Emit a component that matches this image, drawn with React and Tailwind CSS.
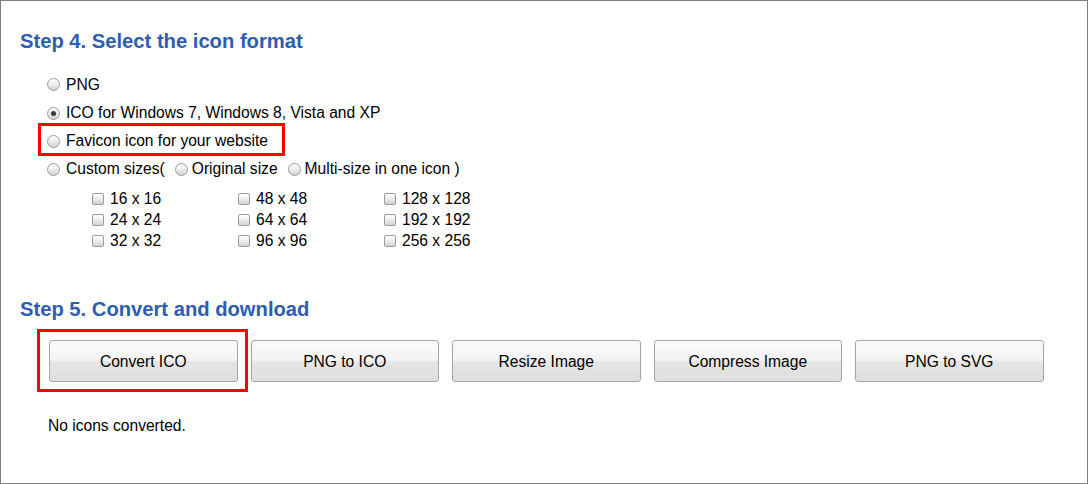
import React from "react";

function Radio({ checked = false, className = "" }) {
  return (
    <span
      className={
        "relative inline-block w-[13px] h-[13px] shrink-0 rounded-full border border-[#9c9c9c] bg-[linear-gradient(to_bottom,#ffffff_0%,#eeeeee_45%,#d2d2d2_100%)] " +
        className
      }
    >
      {checked && (
        <span className="absolute left-[3px] top-[3px] w-[5px] h-[5px] rounded-full bg-[#3a3a3a]" />
      )}
    </span>
  );
}

function Checkbox() {
  return (
    <span className="inline-block w-[12px] h-[12px] shrink-0 rounded-[2px] border border-[#9c9c9c] bg-[linear-gradient(to_bottom,#ffffff_0%,#eeeeee_45%,#d2d2d2_100%)]" />
  );
}

const sizes = [
  ["16 x 16", "48 x 48", "128 x 128"],
  ["24 x 24", "64 x 64", "192 x 192"],
  ["32 x 32", "96 x 96", "256 x 256"],
];

const buttons = ["Convert ICO", "PNG to ICO", "Resize Image", "Compress Image", "PNG to SVG"];

export default function App() {
  return (
    <div className="w-[1088px] h-[484px] border border-[#7f7f7f] bg-white text-black font-['Liberation_Sans',Arial,sans-serif] text-[15.6px]">
      <h2 className="pt-[28px] pl-[19px] text-[20.2px] leading-[24px] font-bold text-[#2b5eb3]">
        Step 4. Select the icon format
      </h2>

      <div className="mt-[17px] ml-[46px]">
        <div className="h-[29px] flex items-center">
          <Radio className="mr-[6px]" />
          <span>PNG</span>
        </div>
        <div className="h-[28px] flex items-center">
          <Radio checked className="mr-[6px]" />
          <span>ICO for Windows 7, Windows 8, Vista and XP</span>
        </div>
        <div className="relative h-[28px] flex items-center">
          <div className="absolute left-[-9px] top-[-4px] w-[247px] h-[33px] border-[3px] border-[#ff0000]" />
          <Radio className="mr-[6px]" />
          <span>Favicon icon for your website</span>
        </div>
        <div className="h-[28px] flex items-center">
          <Radio className="mr-[6px]" />
          <span>Custom sizes(</span>
          <Radio className="ml-[10px] mr-[4px]" />
          <span>Original size</span>
          <Radio className="ml-[10px] mr-[4px]" />
          <span>Multi-size in one icon )</span>
        </div>
      </div>

      <div className="mt-[4px] ml-[91px]">
        {sizes.map((row, i) => (
          <div key={i} className="h-[21px] grid grid-cols-[146px_146px_146px] items-center">
            {row.map((s) => (
              <div key={s} className="flex items-center">
                <Checkbox />
                <span className="ml-[6px]">{s}</span>
              </div>
            ))}
          </div>
        ))}
      </div>

      <h2 className="mt-[47px] pl-[19px] text-[20.2px] leading-[24px] font-bold text-[#2b5eb3]">
        Step 5. Convert and download
      </h2>

      <div className="mt-[19px] ml-[48px] flex gap-[13px]">
        {buttons.map((b, i) => (
          <div key={b} className="relative">
            {i === 0 && (
              <div className="absolute left-[-12px] top-[-11px] right-[-10px] bottom-[-10px] border-[3px] border-[#ff0000]" />
            )}
            <button className="relative w-[188.5px] h-[42px] pt-[1px] rounded-[3px] border border-[#a6a6a6] bg-[linear-gradient(to_bottom,#fbfbfb_0%,#f3f3f3_48%,#e6e6e6_52%,#dedede_100%)] text-[15.6px] text-black">
              {b}
            </button>
          </div>
        ))}
      </div>

      <p className="mt-[34px] ml-[47px] leading-[20px]">No icons converted.</p>
    </div>
  );
}
